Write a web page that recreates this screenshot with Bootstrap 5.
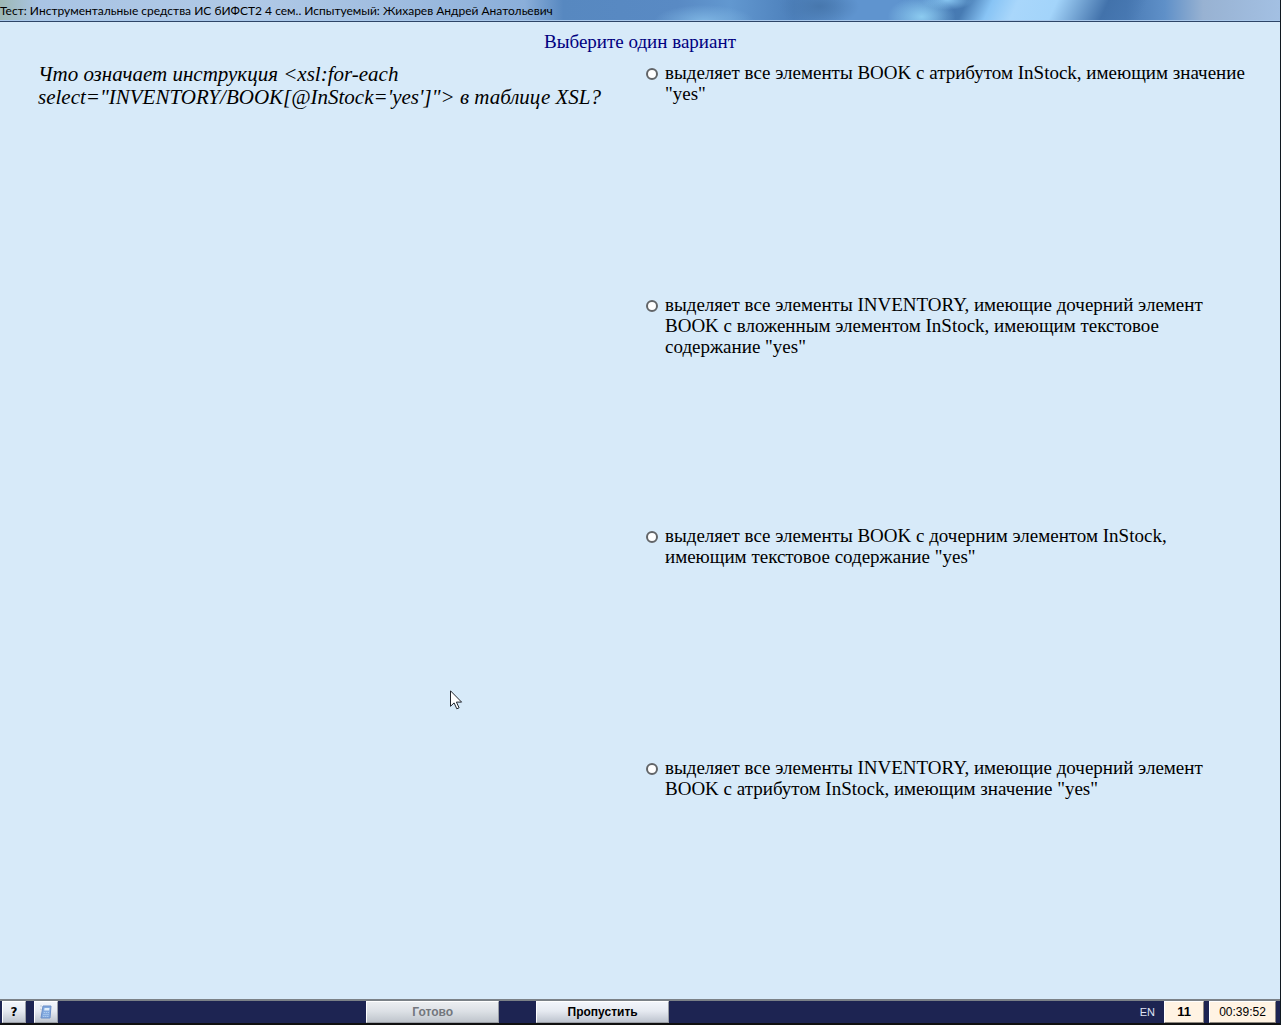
<!DOCTYPE html>
<html lang="ru">
<head>
<meta charset="utf-8">
<meta name="viewport" content="width=device-width, initial-scale=1">
<title>Тест: Инструментальные средства ИС</title>
<link href="https://cdn.jsdelivr.net/npm/bootstrap@5.3.0/dist/css/bootstrap.min.css" rel="stylesheet">
<style>
body { background: #d7eaf9; color: #000; font-family: "Liberation Serif", serif; border-right: 1px solid #101820; }
.titlebar {
  height: 22px; border-bottom: 1px solid #2d4568; box-shadow: inset 0 -1px #a9c8ea;
  background:
    radial-gradient(ellipse 34px 20px at 72% 80%, #8ccbf0, transparent),
    radial-gradient(ellipse 26px 10px at 74% 0, #86c4f0, transparent),
    radial-gradient(ellipse 40px 20px at 64% 30%, #4777ad, transparent),
    radial-gradient(ellipse 50px 16px at 55% 100%, #7db4e2, transparent),
    linear-gradient(115deg, transparent 72%, #4679b3 74%, #477bb3 75%, #88c4f5 77%, #a9d7fb 79%, #a3d4fa 82%, #4272ab 86%, transparent 89%),
    linear-gradient(90deg, #9db8b4 0, #a9c4e4 3%, #b0c9e6 20%, #9dbbdf 32%, #8aaed9 41%, #5788c0 44%, #598ac4 53%, #6298d0 57%, #4d80bb 62%, #5f94cf 66%, #5f94cf 70%, #4c82be 77%, #4a7bb5 88%, #5f90c8 91%, #98b2d2 94%, #a3c0e3 100%);
}
.titlebar h1 { font-family: Lato, sans-serif; font-size: 12px; line-height: 21px; }
.prompt { color: #000080; font-size: 19px; line-height: 22px; padding-top: 9px; }
.question-col { padding: 10px 20px 0 38px; }
.question { font-size: 21px; line-height: 23px; font-style: italic; }
.answers { padding: 9px 30px 11px 6px; }
.answer { flex: 1 1 0; font-size: 19px; line-height: 21px; gap: 7px; }
.answer .form-check-input { width: 12px; height: 12px; margin: 6px 0 0; border: 2px solid #626568; background-color: #fff; }
.pointer { position: absolute; left: 450px; top: 690px; }
.taskbar { height: 26px; background: #1d2452; border-top: 2px solid #7b8187; border-bottom: 2px solid #101010; font: 11px/20px "Liberation Sans", sans-serif; padding: 0 4px 0 2px; }
.taskbar .tools { flex: 3 1 0; }
.taskbar .status { flex: 5 1 0; gap: 5px; }
.taskbar .actions { gap: 37px; }
.taskbar .btn {
  --bs-btn-font-size: 12px; --bs-btn-font-weight: 700; --bs-btn-padding-x: 0; --bs-btn-padding-y: 0; --bs-btn-border-radius: 0;
  --bs-btn-line-height: 20px; --bs-btn-color: #000; --bs-btn-disabled-color: #73777d; --bs-btn-disabled-opacity: 1;
  font-family: "DejaVu Sans", sans-serif; border: 1px solid; border-color: #fff #9a9ea6 #9a9ea6 #fff; height: 22px;
  background: linear-gradient(#f2f5fb, #e6eaf1 45%, #bec4cf);
}
.taskbar .tool { width: 24px; }
.taskbar .action { width: 133px; font-family: "Liberation Sans", sans-serif; }
.taskbar .action:disabled { background: linear-gradient(#eceef1, #dde1e6 45%, #bfc5cc); }
.panel { background: #fff3e3; border: 1px solid; border-color: #fff #8d8780 #8d8780 #fff; text-align: center; height: 22px; }
.counter { width: 40px; font-weight: 700; font-size: 13px; }
.clock { width: 67px; font-size: 12px; }
.lang { color: #dfe3f4; }
</style>
<script defer src="https://cdn.jsdelivr.net/npm/bootstrap@5.3.0/dist/js/bootstrap.bundle.min.js"></script>
</head>
<body class="d-flex flex-column min-vh-100">
<header class="titlebar">
  <h1 class="m-0 fw-normal text-nowrap">Тест: Инструментальные средства ИС бИФСТ2 4 сем.. Испытуемый: Жихарев Андрей Анатольевич</h1>
</header>
<main class="flex-grow-1 d-flex flex-column">
  <div class="prompt text-center" id="prompt">Выберите один вариант</div>
  <div class="row g-0 flex-grow-1">
    <section class="col-6 question-col">
      <p class="question m-0">Что означает инструкция &lt;xsl:for-each select="INVENTORY/BOOK[@InStock='yes']"&gt; в таблице XSL?</p>
    </section>
    <form class="col-6 answers d-flex flex-column" aria-labelledby="prompt">
      <div class="answer d-flex align-items-start"><input class="form-check-input flex-shrink-0" type="radio" name="answer" id="a1"><label for="a1">выделяет все элементы BOOK с атрибутом InStock, имеющим значение "yes"</label></div>
      <div class="answer d-flex align-items-start"><input class="form-check-input flex-shrink-0" type="radio" name="answer" id="a2"><label for="a2">выделяет все элементы INVENTORY, имеющие дочерний элемент BOOK с вложенным элементом InStock, имеющим текстовое содержание "yes"</label></div>
      <div class="answer d-flex align-items-start"><input class="form-check-input flex-shrink-0" type="radio" name="answer" id="a3"><label for="a3">выделяет все элементы BOOK с дочерним элементом InStock, имеющим текстовое содержание "yes"</label></div>
      <div class="answer d-flex align-items-start"><input class="form-check-input flex-shrink-0" type="radio" name="answer" id="a4"><label for="a4">выделяет все элементы INVENTORY, имеющие дочерний элемент BOOK с атрибутом InStock, имеющим значение "yes"</label></div>
    </form>
  </div>
</main>
<footer class="taskbar d-flex">
  <div class="tools d-flex gap-2">
    <button class="btn tool" type="button">?</button>
    <button class="btn tool d-flex align-items-center justify-content-center" type="button" aria-label="Калькулятор">
      <svg width="14" height="15" viewBox="0 0 14 15"><path d="M4 1h8l-1 12H2z" fill="#82a9df" stroke="#6a8fc9"/><path d="M5.500 3h5l-.3 2.500H5.200z" fill="#e0eefb"/><path d="M4.800 7.500h5.400M4.500 9.500h5.400M4.300 11.500h5.300" stroke="#bcd7f4" stroke-dasharray="1 1"/><path d="M1 1h2M1 4l2 1" stroke="#bfcbd9"/></svg>
    </button>
  </div>
  <div class="actions d-flex">
    <button class="btn action" type="button" disabled>Готово</button>
    <button class="btn action" type="button">Пропустить</button>
  </div>
  <div class="status d-flex justify-content-end align-items-center">
    <span class="lang me-1">EN</span>
    <span class="panel counter">11</span>
    <span class="panel clock">00:39:52</span>
  </div>
</footer>
<svg class="pointer" width="13" height="20" viewBox="0 0 13 20" aria-hidden="true"><path d="M.5.800v15.500l3.600-3.400 2.700 5.900 2.300-1-2.700-5.700h5.200z" fill="#fff" stroke="#20242c"/></svg>
</body>
</html>
